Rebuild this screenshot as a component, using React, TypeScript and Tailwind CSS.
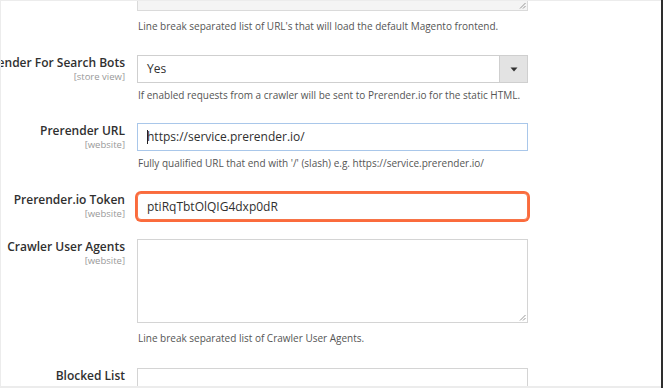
import React from "react";

const font = { fontFamily: '"Open Sans", "Noto Sans", sans-serif' };

function ResizeGrip() {
  return (
    <svg className="absolute right-[1px] bottom-[1px]" width="7" height="7" viewBox="0 0 7 7">
      <path d="M6.5 1 L1 6.5 M6.5 4 L4 6.5" stroke="#8a8a8a" strokeWidth="0.9" fill="none" />
    </svg>
  );
}

function Label({ title, scope }: { title: string; scope: string }) {
  return (
    <div className="w-[124px] shrink-0 flex flex-col items-end whitespace-nowrap">
      <div className="text-[12px] leading-[16px] font-semibold text-[#303030]">{title}</div>
      <div className="text-[9.5px] leading-[13px] -mt-[1px] text-[#999]">{scope}</div>
    </div>
  );
}

function Help({ children, className = "" }: { children: React.ReactNode; className?: string }) {
  return (
    <div className={"pl-[137px] text-[10px] leading-[14px] text-[#555] whitespace-nowrap " + className}>
      {children}
    </div>
  );
}

export default function App() {
  return (
    <div className="w-[664px] h-[388px] overflow-hidden flex bg-white" style={font}>
      <div className="flex-1 flex flex-col border-l border-t border-[#ececec] min-w-0">
        <div className="flex-1 min-h-0 overflow-hidden">
          <div className="ml-[136px] w-[391px] h-[10px] relative bg-[#f4f4f4] border-x border-b border-[#dadada]">
            <ResizeGrip />
          </div>
          <Help className="mt-[8px]">
            Line break separated list of URL's that will load the default Magento frontend.
          </Help>

          <div className="mt-[22px] flex items-start gap-[12px]">
            <Label title="Prerender For Search Bots" scope="[store view]" />
            <div className="w-[391px] h-[28px] flex border border-[#cfcfcf] bg-white">
              <div className="flex-1 pl-[9px] flex items-center text-[12px] text-[#303030]">Yes</div>
              <div className="w-[28px] bg-[#e3e3e3] border-l border-[#cfcfcf] flex items-center justify-center">
                <svg width="8" height="5" viewBox="0 0 8 5">
                  <path d="M0.5 0.5 H7.5 L4 4.5 Z" fill="#333" />
                </svg>
              </div>
            </div>
          </div>
          <Help className="mt-[5px]">
            If enabled requests from a crawler will be sent to Prerender.io for the static HTML.
          </Help>

          <div className="mt-[21px] flex items-start gap-[12px]">
            <Label title="Prerender URL" scope="[website]" />
            <div className="w-[391px] h-[28px] border border-[#a9c7ea] bg-white pl-[9px] flex items-center text-[12px] text-[#303030]">
              <span className="w-px h-[14px] bg-[#222] -mr-px" />
              https://service.prerender.io/
            </div>
          </div>
          <Help className="mt-[5px]">
            Fully qualified URL that end with '/' (slash) e.g. https://service.prerender.io/
          </Help>

          <div className="mt-[22px] flex items-start gap-[12px]">
            <Label title="Prerender.io Token" scope="[website]" />
            <div className="w-[391px] h-[27px] mt-px border border-[#f77448] rounded-[4px] ring-2 ring-[#fb6b3c] bg-white pl-[9px] flex items-center text-[12px] text-[#303030]">
              ptiRqTbtOlQIG4dxp0dR
            </div>
          </div>

          <div className="mt-[19px] flex items-start gap-[12px]">
            <Label title="Crawler User Agents" scope="[website]" />
            <div className="w-[391px] h-[84px] relative border border-[#d4d4d4] bg-white">
              <ResizeGrip />
            </div>
          </div>
          <Help className="mt-[8px]">Line break separated list of Crawler User Agents.</Help>

          <div className="mt-[23px] flex items-start gap-[12px]">
            <Label title="Blocked List" scope="[website]" />
            <div className="w-[391px] h-[60px] border border-[#d4d4d4] bg-white" />
          </div>
        </div>
        <div className="h-[2px] bg-[#ececec] shrink-0" />
      </div>
      <div className="w-[2px] bg-[#2e2e2e] shrink-0" />
      <div className="w-[1px] bg-white shrink-0" />
    </div>
  );
}
